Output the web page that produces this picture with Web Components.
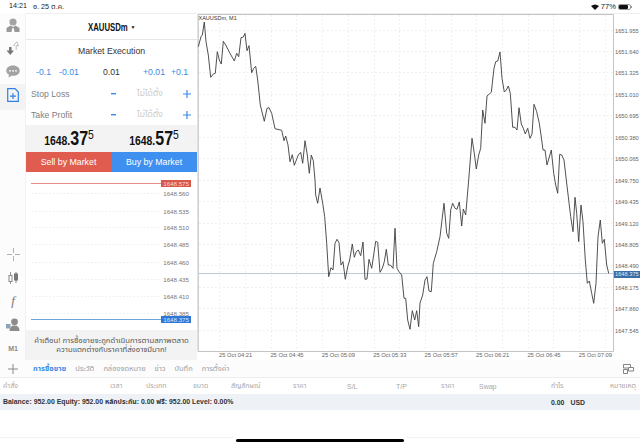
<!DOCTYPE html>
<html>
<head>
<meta charset="utf-8">
<style>
    html, body { margin: 0; height: 100%; background: #fff; }
    body {
        width: 640px; height: 447px; overflow: hidden;
        display: flex; flex-direction: column;
        font-family: "Liberation Sans", "Noto Sans Thai", "Noto Sans", "DejaVu Sans", sans-serif;
        color: #333;
    }
    mt-workspace { flex: 0 0 347px; }
</style>
</head>
<body>
<mt-status></mt-status>
<mt-workspace>
    <mt-toolbar></mt-toolbar>
    <mt-order></mt-order>
    <mt-chart></mt-chart>
</mt-workspace>
<mt-tabs></mt-tabs>
<mt-table></mt-table>
<mt-home></mt-home>

<script>
const SVG_FONT = '"Liberation Sans", "Noto Sans", sans-serif';

class MtStatus extends HTMLElement {
    constructor(){
        super();
        this.attachShadow({mode: 'open'}).innerHTML = `
        <style>
            :host { display: flex; flex: 0 0 13px; height: 13px; align-items: center; justify-content: space-between;
                    padding: 0 8px 0 9px; font-size: 7.2px; color: #222; box-sizing: border-box; }
            .left { display: flex; gap: 6px; }
            .right { display: flex; align-items: center; gap: 2px; font-size: 7.6px; }
        </style>
        <div class="left"><span>14:21</span><span>อ. 25 ต.ค.</span></div>
        <div class="right">
            <svg width="8" height="6" viewBox="0 0 8 6"><path d="M4 6 L0 2 Q4 -1.2 8 2Z" fill="#111"/></svg>
            <span>77%</span>
            <svg width="14" height="6" viewBox="0 0 14 6"><rect x=".5" y=".5" width="12" height="5" rx="1.5" fill="none" stroke="#999"/><rect x="1" y="1" width="9" height="4" rx="1" fill="#111"/><rect x="13" y="2" width="1" height="2" fill="#999"/></svg>
        </div>`;
    }
}

class MtWorkspace extends HTMLElement {
    constructor(){
        super();
        this.attachShadow({mode: 'open'}).innerHTML = `
        <style>
            :host { display: flex; height: 347px; border-top: 1px solid #efefef; box-sizing: border-box; }
        </style>
        <slot></slot>`;
    }
}

class MtToolbar extends HTMLElement {
    constructor(){
        super();
        const g = '#a3a3a3';
        this.attachShadow({mode: 'open'}).innerHTML = `
        <style>
            :host { display: flex; flex-direction: column; flex: 0 0 26px; width: 26px; align-items: center; background: #fcfcfc; margin-top: -1px; }
            .i { flex: 0 0 23.5px; height: 23.5px; width: 26px; display: flex; align-items: center; justify-content: center; }
            .on { background: #f3f3f3; box-shadow: 0 3px 0 #f3f3f3; }
            .gap { flex: 1; }
            .m1 { font-size: 7px; color: #8a8a8a; font-weight: bold; }
            .f { font: italic 13px "Liberation Serif", serif; color: #777; }
        </style>
        <div class="i"><svg width="14" height="14" viewBox="0 0 14 14" fill="${g}"><circle cx="7" cy="4" r="3.6"/><path d="M4.5 7.5 L7 9 L9.5 7.5 L13.5 10 V14 H8.6 L7.6 10 H6.4 L5.4 14 H.5 V10Z" fill="#999"/></svg></div>
        <div class="i"><svg width="14" height="14" viewBox="0 0 14 14"><path d="M3 6 V9.5 H.5 L4.3 14 L8 9.5 H5.6 V6Z" fill="#777"/><path d="M9.2 9 V4.6 H11.6 L9.7 .8 L6.6 4.6 H7.6" transform="translate(1 0)" fill="#fff" stroke="#aaa" stroke-width=".8"/></svg></div>
        <div class="i"><svg width="14" height="13" viewBox="0 0 14 13" fill="${g}"><path d="M7 .5 C3 .5 .3 2.8 .3 5.7 C.3 7.5 1.5 9 3 9.7 L2.4 12.4 L5.6 10.8 C10.5 11.3 13.7 8.8 13.7 5.7 C13.7 2.8 11 .5 7 .5Z"/><g fill="#fff"><circle cx="4" cy="5.8" r=".9"/><circle cx="7" cy="5.8" r=".9"/><circle cx="10" cy="5.8" r=".9"/></g></svg></div>
        <div class="i on"><svg width="12" height="14" viewBox="0 0 12 14" fill="none" stroke="#2f80e8" stroke-width="1.2"><path d="M.7 .7 H8 L11.3 4 V13.3 H.7Z"/><path d="M6 5.2 V11 M3 8.1 H9"/></svg></div>
        <div class="gap"></div>
        <div class="i"><svg width="13" height="13" viewBox="0 0 13 13" stroke="#b0b0b0" stroke-width="1"><path d="M6.5 0 V5 M6.5 8 V13 M0 6.5 H5 M8 6.5 H13"/></svg></div>
        <div class="i"><svg width="11" height="12" viewBox="0 0 11 12"><path d="M2.5 0 V12" stroke="#888" stroke-width=".9"/><path d="M8 0 V11" stroke="#777" stroke-width=".9"/><rect x="1" y="3.5" width="3" height="6" fill="#fff" stroke="#888"/><rect x="6.5" y="2" width="3" height="6" fill="#777" stroke="#777"/></svg></div>
        <div class="i f">f</div>
        <div class="i"><svg width="14" height="13" viewBox="0 0 14 13"><circle cx="8.5" cy="3.8" r="3.4" fill="#8c8c8c"/><path d="M3.5 13 Q3.5 7.5 8.5 7.5 Q13.5 7.5 13.5 13Z" fill="#8c8c8c"/><rect x="0" y="6" width="4.5" height="4.5" fill="#8fa3b8"/></svg></div>
        <div class="i m1">M1</div>`;
    }
}

class MtOrder extends HTMLElement {
    constructor(){
        super();
        const blue = '#3a8ae6';
        const minus = `<svg width="5" height="2" viewBox="0 0 5 2"><rect width="5" height="1.4" fill="${blue}"/></svg>`;
        const plus = `<svg width="8" height="8" viewBox="0 0 8 8" stroke="${blue}" stroke-width="1.2"><path d="M4 0 V8 M0 4 H8"/></svg>`;
        this.attachShadow({mode: 'open'}).innerHTML = `
        <style>
            :host { display: flex; flex-direction: column; flex: 0 0 171px; width: 171px; background: #fff; font-size: 8.7px;
                    box-shadow: -1px 0 0 #f1f1f1; }
            .head { flex: 0 0 26px; box-sizing: border-box; display: flex; align-items: center; justify-content: center; gap: 3px;
                    border-bottom: 1px solid #e6e6e6; font-size: 10.5px; font-weight: bold; color: #111; }
            .head span { display: block; width: 40px; white-space: nowrap; transform: scaleX(.74); transform-origin: left center; }
            .head i { font-style: normal; font-size: 5px; }
            .mode { flex: 0 0 21px; display: flex; align-items: center; justify-content: center; color: #333; }
            .vol { flex: 0 0 22px; display: grid; grid-template-columns: 23px 44px 40px 28px 1fr; align-items: center; color: ${blue};
                   padding-left: 10px; white-space: nowrap; }
            .vol .v { color: #333; }
            .row { flex: 0 0 21px; display: grid; grid-template-columns: 73px 19px 54px 20px; align-items: center; padding-left: 5px; color: #808080; }
            .row .b { display: flex; align-items: center; justify-content: center; }
            .row .n { color: #cbcbcb; font-size: 8.6px; text-align: center; }
            .quote { flex: 0 0 27px; display: grid; grid-template-columns: 1fr 1fr; background: #f3f3f3; color: #111; }
            .quote div { display: flex; align-items: center; justify-content: center; }
            .num { display: inline-block; transform: scaleX(.8); white-space: nowrap; font-size: 13px; font-weight: bold; }
            .num b { font-size: 20px; }
            .num sup { font-size: 13px; font-weight: normal; vertical-align: baseline; position: relative; top: -6px; line-height: 0; }
            .btns { flex: 0 0 20px; display: grid; grid-template-columns: 85px 1fr; color: #fff; font-size: 8.8px; }
            .btns div { display: flex; align-items: center; justify-content: center; }
            .sell { background: #e05c4e; }
            .buy { background: #3f8ff0; }
            mt-ladder { flex: 0 0 158px; }
            .warn { flex: 0 0 30px; box-sizing: border-box; padding-top: 6px; background: #f3f3f3; color: #555; font-size: 7.7px; line-height: 9px; text-align: center; white-space: nowrap; overflow: hidden; }
        </style>
        <div class="head"><span>XAUUSDm</span><i>▼</i></div>
        <div class="mode">Market Execution</div>
        <div class="vol"><span>-0.1</span><span>-0.01</span><span class="v">0.01</span><span>+0.01</span><span>+0.1</span></div>
        <div class="row"><span>Stop Loss</span><span class="b">${minus}</span><span class="n">ไม่ได้ตั้ง</span><span class="b">${plus}</span></div>
        <div class="row"><span>Take Profit</span><span class="b">${minus}</span><span class="n">ไม่ได้ตั้ง</span><span class="b">${plus}</span></div>
        <div class="quote">
            <div><span class="num">1648.<b>37</b><sup>5</sup></span></div>
            <div><span class="num">1648.<b>57</b><sup>5</sup></span></div>
        </div>
        <div class="btns"><div class="sell">Sell by Market</div><div class="buy">Buy by Market</div></div>
        <mt-ladder></mt-ladder>
        <div class="warn">คำเตือน! การซื้อขายจะถูกดำเนินการตามสภาพตลาด<br>ความแตกต่างกับราคาที่ส่งอาจมีมาก!</div>`;
    }
}

class MtLadder extends HTMLElement {
    constructor(){
        super();
        // svg origin = page (26, 172)
        const rows = [['1648.560',21],['1648.535',39],['1648.510',55],['1648.485',72],['1648.460',90],['1648.435',107],['1648.410',124],['1648.385',141]];
        let s = '';
        for(const [t, y] of rows){
            s += `<line x1="6" x2="134" y1="${y}.5" y2="${y}.5" stroke="#ededed" stroke-dasharray="1.5 2"/>`;
            s += `<text x="163" y="${y + 2.5}" text-anchor="end" font-size="6.2" fill="#777">${t}</text>`;
        }
        this.attachShadow({mode: 'open'}).innerHTML = `
        <style>
            :host { display: block; background: #fff; }
            svg { display: block; font-family: ${SVG_FONT}; }
        </style>
        <svg width="171" height="158" viewBox="0 0 171 158">
            ${s}
            <line x1="5" x2="135" y1="11.5" y2="11.5" stroke="#e58f85"/>
            <rect x="135" y="8" width="30" height="7" fill="#d9584c"/>
            <text x="163" y="13.7" text-anchor="end" font-size="6.2" fill="#f6d8d4">1648.575</text>
            <line x1="5" x2="135" y1="147.5" y2="147.5" stroke="#6fa3dc"/>
            <rect x="135" y="144" width="30" height="7" fill="#2f78d8"/>
            <text x="163" y="149.7" text-anchor="end" font-size="6.2" fill="#d7e7fa">1648.375</text>
        </svg>`;
    }
}

class MtChart extends HTMLElement {
    constructor(){
        super();
        // svg origin = page (197, 14); points traced in page coordinates
        const top = [[198.3,46.7],[201,36.7],[202.3,35],[204.3,22],[206,41.7],[208.3,55],[210.7,77.3],[213.3,74],[215.3,73.3],[217.3,51.7],[219.3,60],[221.3,64],[223.3,41.3],[225.7,45],[230,53.3],[234.3,61],[236.7,53.3],[238.7,56.7],[241,37.7],[243.3,37],[245,33.3],[247,50.7],[249,45.7],[251.7,72.7],[253.7,68.3],[255.7,66.3],[257.7,80],[260.3,105],[264.3,121.3],[267,108.3],[269,107.7],[271.7,113.3],[275,128.7],[281.7,130.3],[284,140.7],[285.7,136],[288,145],[290,161.7],[292.3,154.7],[294.3,165.3],[298.3,155],[300.7,152.3],[302.7,163.3],[305,140.7],[307.3,155],[309.3,173.3],[311.3,155],[313.3,160.7],[315,180]];
        const mid = [[315.7,195],[317.7,203.3],[320,188],[322.7,203.3],[324.7,216.7],[326.7,243.3],[328.7,276.7],[331,267.7],[333,270],[335,243.3],[337,239.3],[339,242.7],[341,265],[343,261.7],[345.3,279.3],[347.7,266.7],[349.7,260],[352.3,244],[354.3,257.3],[356.3,251.7],[358.3,250],[360.7,255.7],[363,242],[365,279.3],[367,279],[369,259.3],[371.7,268.3],[375.7,241.3],[377.7,242.3],[380,272.3],[382.3,268.3],[384.3,261.7],[386.3,249.3],[388.3,265],[390.3,265],[393,268.3],[395,228.3],[397,268.3],[399,271.7],[401.7,275],[404,298.3],[405.7,298.3],[407.7,320],[410,329.3],[412.3,310.7],[414.7,320],[416.7,310.7],[418.7,326.7],[420,303]];
        const rise = [[422.7,295],[425,280],[427,276.7],[429,291],[431.3,291.7],[433.3,263.3],[436.7,251.7],[440,236.7],[444,203.3],[446.7,233.3],[448.7,238.3],[450.7,210],[452.7,203.3],[455,208.3],[457,209.3],[459.3,202],[461.7,226],[463.3,209],[465.7,215],[468.7,180],[472,138.3],[474.3,153.3],[476.3,169],[478.7,155],[480.7,148.3],[482.7,110],[485,123.3],[487,96],[491.3,92.3],[494,68.3],[495.7,61.7],[497.7,61],[500,52],[502,78.3],[504.3,92],[506.3,90],[508.3,86],[510.3,93.3],[512.7,127.3],[515,127.3],[517,130],[519,107.7],[521.3,124],[523.3,128.3],[525.3,134],[527.7,128.3],[530,138.3],[532,134],[534,104.3],[536.7,111.7],[539.3,123.3],[541,135],[543,150],[545,150],[547,165],[551.3,150],[553.7,173.3],[555.7,185],[557.7,193.3],[559.7,154.3],[561.7,155],[564,160],[566.3,180]];
        const end = [[570.7,216.7],[573,231.7],[575,197.3],[576.7,213.3],[578.7,241.7],[581,205],[583,221.7],[585.3,260],[587.3,283.3],[589.3,281],[591.7,293.3],[593.7,303.3],[596,283.3],[598,236.7],[600.3,220],[602.3,243.3],[604.3,239.3],[606.7,265],[608.7,273.3]];
        const pts = top.concat(mid, rise, end).map(p => (p[0] - 197).toFixed(1) + ',' + (p[1] - 14).toFixed(1)).join(' ');

        const prices = ['1651.955','1651.640','1651.325','1651.010','1650.695','1650.380','1650.065','1649.750','1649.435','1649.120','1648.805','1648.490','1648.175','1647.860','1647.545'];
        const times = ['04:21','04:45','05:09','05:33','05:57','06:21','06:45','07:09'];
        let grid = '', labels = '';
        prices.forEach((p, i) => {
            const y = Math.round(15.5 + i * 21.45);
            grid += `<line x1="2" x2="416" y1="${y}.5" y2="${y}.5" stroke="#ececec" stroke-dasharray="1.5 2.5"/>`;
            labels += `<text x="418" y="${y + 2.5}" font-size="5.7" fill="#666">${p}</text>`;
        });
        for(let i = 0; i < 16; i++){
            const x = Math.round(22.3 + i * 25.7);
            grid += `<line x1="${x}.5" x2="${x}.5" y1="1" y2="337" stroke="#ececec" stroke-dasharray="1.5 2.5"/>`;
        }
        times.forEach((t, i) => {
            labels += `<text x="${22 + i * 51.4}" y="343" font-size="5.8" fill="#666">25 Oct ${t}</text>`;
        });

        this.attachShadow({mode: 'open'}).innerHTML = `
        <style>
            :host { display: block; flex: 1; background: #fff; }
            svg { display: block; font-family: ${SVG_FONT}; }
        </style>
        <svg width="443" height="346" viewBox="0 0 443 346">
            ${grid}
            <path d="M1 0.5 V337.5 H416.5 V0.5 H1" fill="none" stroke="#c4c4c4"/>
            <line x1="1.5" y1="0.5" x2="1.5" y2="337" stroke="#d0d0d0" stroke-width="1"/>
            <line x1="2" x2="416" y1="259.5" y2="259.5" stroke="#bccad8"/>
            <polyline points="${pts}" fill="none" stroke="#3d3d3d" stroke-width=".9" stroke-linejoin="round"/>
            <text x="1.5" y="6" font-size="5.5" fill="#333">XAUUSDm, M1</text>
            ${labels}
            <rect x="417" y="257" width="26" height="7" fill="#3a6ea5"/>
            <text x="418" y="262.4" font-size="5.7" fill="#dce8f5">1648.375</text>
        </svg>`;
    }
}

class MtTabs extends HTMLElement {
    constructor(){
        super();
        this.attachShadow({mode: 'open'}).innerHTML = `
        <style>
            :host { display: flex; flex: 0 0 18px; height: 18px; align-items: center; box-sizing: border-box; padding: 0 6px 0 8px;
                    border-bottom: 1px solid #eeeeee; background: #fcfcfc; font-size: 7.5px; color: #a0a0a0; }
            .plus { width: 10px; height: 10px; margin-right: 15px; }
            .tabs { display: flex; gap: 9px; flex: 1; }
            .on { color: #3a8ae6; font-weight: bold; }
        </style>
        <svg class="plus" viewBox="0 0 10 10" stroke="#888" stroke-width="1"><path d="M5 0 V10 M0 5 H10"/></svg>
        <div class="tabs"><span class="on">การซื้อขาย</span><span>ประวัติ</span><span>กล่องจดหมาย</span><span>ข่าว</span><span>บันทึก</span><span>การตั้งค่า</span></div>
        <svg width="11" height="10" viewBox="0 0 11 10" fill="none" stroke="#777" stroke-width=".9"><path d="M.5 4 V.5 H7.5 V3"/><path d="M.5 4 H5 M.5 5.5 V9.5 H4.5 V5.5 H.5"/><path d="M5.5 3.5 H10.5 V7 H5.5Z"/></svg>`;
    }
}

class MtTable extends HTMLElement {
    constructor(){
        super();
        const cols = ['คำสั่ง','เวลา','ประเภท','ขนาด','สัญลักษณ์','ราคา','S/L','T/P','ราคา','Swap','กำไร','หมายเหตุ'];
        this.attachShadow({mode: 'open'}).innerHTML = `
        <style>
            :host { display: block; flex: 0 0 32px; }
            .head { display: grid; grid-template-columns: 107px 36px 47px 38px 62px 54px 49px 45px 38px 72px 59px 1fr; align-items: center;
                    height: 16px; padding-left: 3px; font-size: 7px; color: #a8a8a8; white-space: nowrap; }
            .bal { height: 16px; background: #eef2f7; display: flex; align-items: center; padding-left: 3px; font-size: 6.9px; font-weight: bold; color: #333; }
            .bal .left { flex: 0 0 548px; }
            .bal .pl { display: flex; gap: 6px; }
        </style>
        <div class="head">${cols.map(c => `<span>${c}</span>`).join('')}</div>
        <div class="bal"><span class="left">Balance: 952.00 Equity: 952.00 หลักประกัน: 0.00 ฟรี: 952.00 Level: 0.00%</span><span class="pl"><span>0.00</span><span>USD</span></span></div>`;
    }
}

class MtHome extends HTMLElement {
    constructor(){
        super();
        this.attachShadow({mode: 'open'}).innerHTML = `
        <style>
            :host { display: flex; flex: 1; flex-direction: column; align-items: center; }
            .line { align-self: stretch; height: 1px; margin-top: 27px; background: #f2f2f2; }
            .pill { width: 168px; height: 3px; margin-top: 1px; border-radius: 2px; background: #000; box-shadow: 0 0 0 3px #fff; }
        </style>
        <div class="line"></div>
        <div class="pill"></div>`;
    }
}

customElements.define('mt-status', MtStatus);
customElements.define('mt-workspace', MtWorkspace);
customElements.define('mt-toolbar', MtToolbar);
customElements.define('mt-ladder', MtLadder);
customElements.define('mt-order', MtOrder);
customElements.define('mt-chart', MtChart);
customElements.define('mt-tabs', MtTabs);
customElements.define('mt-table', MtTable);
customElements.define('mt-home', MtHome);
</script>
</body>
</html>
